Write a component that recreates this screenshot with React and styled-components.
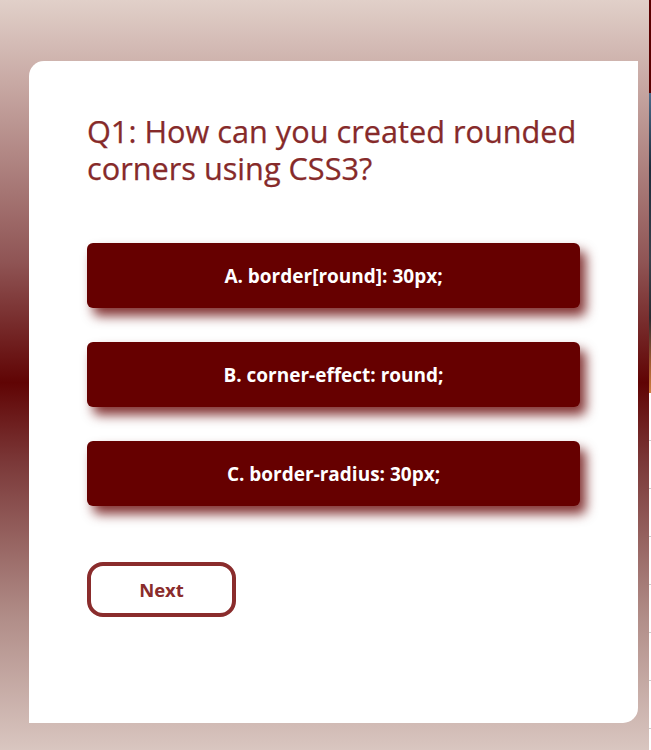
import React from "react";
import styled, { createGlobalStyle } from "styled-components";

const Global = createGlobalStyle`
  html, body { margin: 0; padding: 0; }
  body {
    font-family: "Open Sans", "Noto Sans", sans-serif;
    background: #fff;
  }
`;

const Page = styled.div`
  display: flex;
  width: 651px;
  height: 750px;
  overflow: hidden;
`;

const Stage = styled.main`
  width: 649px;
  flex: none;
  height: 750px;
  box-sizing: border-box;
  padding: 61px 11px 27px 29px;
  background: linear-gradient(
    to bottom,
    #e1d0c9 0%,
    #c8a9a4 11%,
    #8f5454 35%,
    #600404 51%,
    #7c3a3a 62%,
    #b08c87 82%,
    #d9c6c0 100%
  );
`;

const Edge = styled.aside`
  width: 2px;
  flex: none;
  display: flex;
  flex-direction: column;
`;

const EdgeTop = styled.div`
  height: 93px;
  background: #5a0000;
`;

const EdgePhoto = styled.div`
  height: 300px;
  background: linear-gradient(
    to bottom,
    #4b6a8a 0%,
    #1e2a3a 25%,
    #3a3f4a 55%,
    #2a2a30 75%,
    #a05a30 90%,
    #d08040 100%
  );
`;

const EdgeList = styled.div`
  flex: 1;
  background: repeating-linear-gradient(
    to bottom,
    #fff 0px,
    #fff 47px,
    #ccc 47px,
    #ccc 48px
  );
`;

const Card = styled.section`
  height: 662px;
  box-sizing: border-box;
  background: #fff;
  border-radius: 15px 0 15px 0;
  padding: 52px 58px 40px 58px;
  display: flex;
  flex-direction: column;
`;

const Question = styled.h2`
  margin: 0 0 56px;
  font-size: 30.7px;
  line-height: 37px;
  font-weight: 400;
  color: #862a2a;
  -webkit-text-stroke: 0.25px #862a2a;
`;

const Options = styled.div`
  display: flex;
  flex-direction: column;
  gap: 34px;
`;

const Option = styled.button`
  height: 65px;
  border: none;
  border-radius: 6px;
  background: #660000;
  color: #fff;
  font-family: inherit;
  font-size: 19px;
  font-weight: 700;
  cursor: pointer;
  box-shadow: 6px 8px 12px rgba(100, 0, 0, 0.8);
`;

const NextButton = styled.button`
  margin-top: 56px;
  align-self: flex-start;
  width: 149px;
  height: 55px;
  box-sizing: border-box;
  border: 4px solid #8a2c2c;
  border-radius: 16px;
  background: #fff;
  color: #8a2c2c;
  font-family: inherit;
  font-size: 18.5px;
  font-weight: 700;
  cursor: pointer;
`;

const options = [
  "A. border[round]: 30px;",
  "B. corner-effect: round;",
  "C. border-radius: 30px;",
];

export default function App() {
  return (
    <Page>
      <Global />
      <Stage>
        <Card>
          <Question>Q1: How can you created rounded corners using CSS3?</Question>
          <Options>
            {options.map((o) => (
              <Option key={o}>{o}</Option>
            ))}
          </Options>
          <NextButton>Next</NextButton>
        </Card>
      </Stage>
      <Edge>
        <EdgeTop />
        <EdgePhoto />
        <EdgeList />
      </Edge>
    </Page>
  );
}
